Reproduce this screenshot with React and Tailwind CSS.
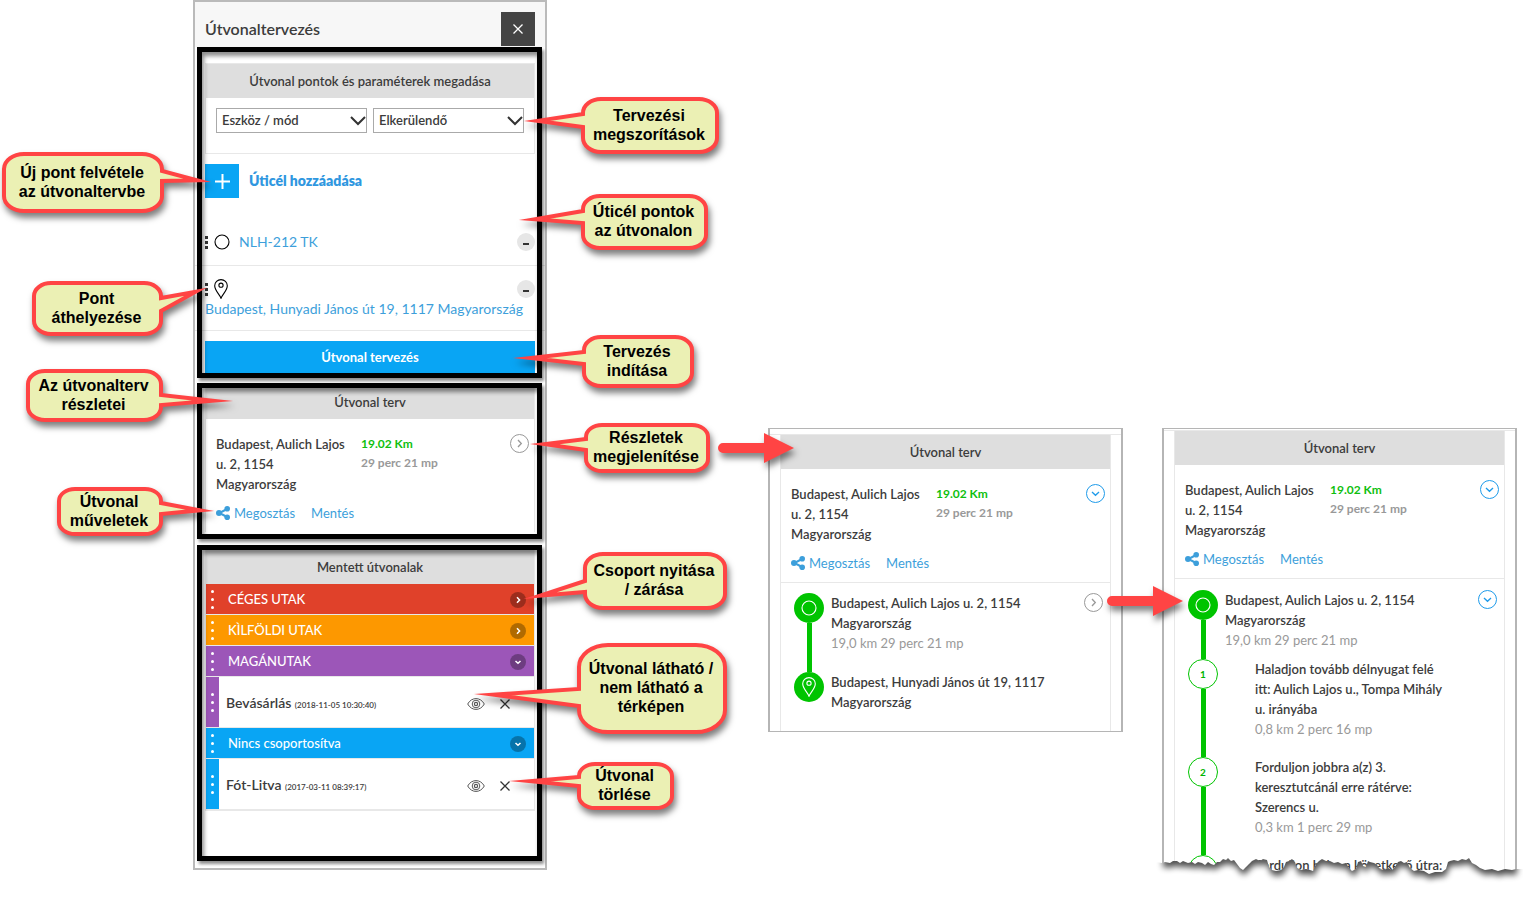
import React, { useState } from "react";

const BORDER = "border-[#e8e8e8]";

// Rounded speech bubble with a pointed tail. All numbers are local to the bubble.
const Callout = ({ className, width, height, tail, children }) => {
    const ry = Math.round(height * 0.24);
    const rx = Math.round(ry * 1.3);
    const right = width - 2;
    const bottom = height - 2;
    const top = tail.from + 2;
    const end = tail.to - 2;
    const half = (end - top) / 2;
    const middle = (end + top) / 2;
    const baseX = tail.x > 0 ? right : 2;
    // the mitred stroke reaches past the apex, so pull the apex back
    const ratio = half / (half + 2);
    const apexX = baseX + (tail.x - baseX) * ratio;
    const apexY = middle + (tail.y - middle) * ratio;
    const rightSide = tail.x > 0 ? `V${top} L${apexX} ${apexY} L${right} ${end}` : "";
    const leftSide = tail.x > 0 ? "" : `V${end} L${apexX} ${apexY} L2 ${top}`;
    const d = `M${2 + rx} 2 H${right - rx} A${rx} ${ry} 0 0 1 ${right} ${2 + ry} ${rightSide}
        V${bottom - ry} A${rx} ${ry} 0 0 1 ${right - rx} ${bottom}
        H${2 + rx} A${rx} ${ry} 0 0 1 2 ${bottom - ry} ${leftSide}
        V${2 + ry} A${rx} ${ry} 0 0 1 ${2 + rx} 2 Z`;

    return (
        <div className={`absolute z-20 grid place-items-center pointer-events-none ${className}`}>
            <svg
                width={width}
                height={height}
                className="[grid-area:1/1] overflow-visible drop-shadow-[2px_5px_3px_rgba(0,0,0,0.5)]"
            >
                <path d={d} fill="#ebf0b4" stroke="#ff4444" strokeWidth="4" strokeMiterlimit="60" />
            </svg>
            <p className="[grid-area:1/1] z-10 pb-[2px] pr-[2px] text-center whitespace-nowrap font-['Liberation_Sans',sans-serif] font-bold text-base leading-[19px] text-black">
                {children}
            </p>
        </div>
    );
};

const Arrow = ({ className }) => (
    <svg
        width="76"
        height="30"
        viewBox="0 0 76 30"
        className={`absolute z-20 overflow-visible drop-shadow-[2px_5px_3px_rgba(0,0,0,0.5)] ${className}`}
    >
        <path d="M5 10 H46 V0 L76 15 L46 30 V20 H5 A5 5 0 0 1 5 10 Z" fill="#ff4444" />
    </svg>
);

// Thick black marker frame laid over a section
const Frame = ({ className }) => (
    <div
        className={`absolute z-10 -left-2 right-[-7px] border-5 border-black pointer-events-none shadow-[2px_3px_3px_rgba(0,0,0,0.45),inset_2px_4px_4px_rgba(0,0,0,0.45)] ${className}`}
    ></div>
);

const PinIcon = ({ className }) => (
    <svg width="14" height="20" viewBox="0 0 14 20" fill="none" stroke="currentColor" className={className}>
        <path d="M7 19.2 C5.6 15.6 0.7 11.4 0.7 6.8 A6.3 6.2 0 0 1 13.3 6.8 C13.3 11.4 8.4 15.6 7 19.2 Z" strokeWidth="1.1" />
        <circle cx="7" cy="6.2" r="2.1" strokeWidth="1.1" />
    </svg>
);

const RingIcon = ({ className }) => (
    <svg width="16" height="16" viewBox="0 0 16 16" fill="none" stroke="currentColor" className={className}>
        <circle cx="8" cy="8" r="7" strokeWidth="1.1" />
    </svg>
);

const ShareIcon = () => (
    <svg width="14" height="14" viewBox="0 0 14 14" className="shrink-0">
        <path d="M11 3 L3.5 7 L11 11" fill="none" stroke="currentColor" strokeWidth="2" />
        <circle cx="11.2" cy="2.8" r="2.8" fill="currentColor" />
        <circle cx="3" cy="7" r="3" fill="currentColor" />
        <circle cx="11.2" cy="11.2" r="2.8" fill="currentColor" />
    </svg>
);

const EyeIcon = () => (
    <svg width="18" height="14" viewBox="0 0 18 14" fill="none" stroke="#555">
        <path d="M0.7 7 C4.5 -0.2 13.5 -0.2 17.3 7 C13.5 14.2 4.5 14.2 0.7 7 Z" strokeWidth="1" />
        <circle cx="9" cy="7" r="3.8" strokeWidth="1" />
        <circle cx="9" cy="7" r="1.6" strokeWidth="1.2" />
    </svg>
);

const CrossIcon = ({ className }) => (
    <svg width="10" height="10" viewBox="0 0 10 10" fill="none" stroke="currentColor" className={className}>
        <path d="M0.5 0.5 L9.5 9.5 M9.5 0.5 L0.5 9.5" strokeWidth="1.3" />
    </svg>
);

const RoundToggle = ({ open, onClick, label, className }) => (
    <button
        onClick={onClick}
        aria-label={label}
        className={`shrink-0 size-[19px] rounded-full border flex items-center justify-center ${
            open ? "border-[#1e9bea] text-[#1e9bea]" : "border-[#999] text-[#999]"
        } ${className}`}
    >
        <svg width="9" height="9" viewBox="0 0 9 9" fill="none" stroke="currentColor" strokeWidth="1.3">
            {open ? <path d="M1 3 L4.5 6.3 L8 3" /> : <path d="M3 1 L6.3 4.5 L3 8" />}
        </svg>
    </button>
);

const SectionTitle = ({ children }) => (
    <h2 className="h-[34px] pt-[2px] flex items-center justify-center bg-[#dedede] text-[13px] font-semibold">{children}</h2>
);

const Dropdown = ({ id, label }) => (
    <div className="relative flex-1">
        <select
            id={id}
            aria-label={label}
            className="block w-full h-[25px] pl-[5px] pr-6 pt-px appearance-none border border-[#aaa] bg-white text-[13px] font-semibold"
        >
            <option>{label}</option>
        </select>
        <svg
            width="16"
            height="10"
            viewBox="0 0 16 10"
            fill="none"
            stroke="#333"
            strokeWidth="2"
            className="absolute right-px top-2 pointer-events-none"
        >
            <path d="M1 1 L8 8 L15 1" />
        </svg>
    </div>
);

const Grip = () => (
    <span className="flex flex-col gap-[2px] cursor-move">
        <i className="size-[3px] bg-[#333]"></i>
        <i className="size-[3px] bg-[#333]"></i>
        <i className="size-[3px] bg-[#333]"></i>
    </span>
);

const RemoveButton = ({ label }) => (
    <button aria-label={label} className="ml-auto size-[18px] rounded-full bg-[#e6e6e6] flex items-center justify-center">
        <span className="w-[6px] h-[2px] mt-[3px] bg-[#333]"></span>
    </button>
);

const RoutePlan = ({ open, children }) => (
    <div className={`border-x ${BORDER} bg-white`}>
        <SectionTitle>Útvonal terv</SectionTitle>
        <div className="pt-[15px] pb-[9px] pl-[10px] pr-[5px]">
            <div className="flex items-start">
                <p className="w-[145px] pr-[10px] text-[13px] leading-5 font-semibold">
                    Budapest, Aulich Lajos u. 2, 1154 Magyarország
                </p>
                <div className="flex-1 text-xs leading-[19px] font-bold">
                    <p className="text-[#0fbf0f]">19.02 Km</p>
                    <p className="text-[#999]">29 perc 21 mp</p>
                </div>
                <RoundToggle open={open} label="Részletek" />
            </div>
            <div className="mt-[9px] flex items-center gap-4 text-[13px] leading-5 text-[#3d9fdb]">
                <a href="#share" className="flex items-center gap-1">
                    <ShareIcon />
                    Megosztás
                </a>
                <a href="#save">Mentés</a>
            </div>
        </div>
        {children}
    </div>
);

const StopItem = ({ icon, title, info, className, children }) => (
    <li className="flex">
        <div className="w-[30px] shrink-0 flex flex-col items-center">
            <span className="size-[30px] rounded-full bg-[#00c400] text-white flex items-center justify-center">{icon}</span>
            {info && <span className="w-[5px] flex-1 bg-[#00c400]"></span>}
        </div>
        <div className={`flex-1 pl-[7px] text-[13px] leading-5 ${className}`}>
            <p className="font-semibold">{title}</p>
            {info && <p className="text-[#999]">{info}</p>}
        </div>
        {children}
    </li>
);

const StepItem = ({ number, title, info, className }) => (
    <li className={`flex ${className}`}>
        <div className="w-[30px] shrink-0 flex flex-col items-center">
            <span className="size-[30px] shrink-0 rounded-full border border-[#00c400] bg-white text-[#00b400] text-[10px] font-bold flex items-center justify-center">
                {number}
            </span>
            <span className="w-[5px] flex-1 bg-[#00c400]"></span>
        </div>
        <div className="flex-1 pl-[37px] pr-[52px] text-[13px] leading-5">
            <p className="font-semibold">{title}</p>
            {info && <p className="pb-[18px] text-[#999]">{info}</p>}
        </div>
    </li>
);

const WhiteDots = () => (
    <span className="w-[13px] shrink-0 flex flex-col items-center justify-center gap-[5px]">
        <i className="size-[3px] rounded-full bg-white"></i>
        <i className="size-[3px] rounded-full bg-white"></i>
        <i className="size-[3px] rounded-full bg-white"></i>
    </span>
);

const groups = [
    { name: "CÉGES UTAK", color: "bg-[#e0412a]", open: false, routes: [] },
    { name: "KÌLFÖLDI UTAK", color: "bg-[#fd9800]", open: false, routes: [] },
    {
        name: "MAGÁNUTAK",
        color: "bg-[#9c56b8]",
        open: true,
        routes: [{ name: "Bevásárlás", date: "(2018-11-05 10:30:40)" }],
    },
    {
        name: "Nincs csoportosítva",
        color: "bg-[#09a5f4]",
        open: true,
        routes: [{ name: "Fót-Litva", date: "(2017-03-11 08:39:17)" }],
    },
];

const RouteGroup = ({ group }) => {
    const [open, setOpen] = useState(group.open);

    return (
        <>
            <div className={`h-[30px] flex text-white ${group.color}`}>
                <WhiteDots />
                <h3 className="flex-1 pl-[9px] text-[13px] leading-[30px] font-medium">{group.name}</h3>
                <button
                    onClick={() => setOpen(!open)}
                    aria-label={group.name}
                    className="self-center mt-[2px] mr-2 size-4 rounded-full bg-black/30 flex items-center justify-center"
                >
                    <svg width="8" height="8" viewBox="0 0 8 8" fill="none" stroke="currentColor" strokeWidth="1.5">
                        {open ? <path d="M1.5 3 L4 5.3 L6.5 3" /> : <path d="M3 1.2 L5.6 4 L3 6.8" />}
                    </svg>
                </button>
            </div>
            {open &&
                group.routes.map((route) => (
                    <div key={route.name} className="h-[50px] flex items-center bg-white">
                        <div className={`self-stretch flex ${group.color}`}>
                            <WhiteDots />
                        </div>
                        <p className="flex-1 pl-[7px] pt-[2px] text-sm font-semibold">
                            {route.name} <span className="text-[8px] font-semibold">{route.date}</span>
                        </p>
                        <button aria-label="Megjelenítés" className="mt-1">
                            <EyeIcon />
                        </button>
                        <button aria-label="Törlés" className="mt-1 ml-[15px] mr-6 text-[#333]">
                            <CrossIcon />
                        </button>
                    </div>
                ))}
        </>
    );
};

const PlannerPanel = () => (
    <section className="w-full border-2 border-[#bababa] bg-white">
        <header className="h-[45px] pl-[10px] pr-[10px] flex items-center justify-between bg-[#f7f7f7]">
            <h1 className="mt-2 text-base font-semibold">Útvonaltervezés</h1>
            <button aria-label="Bezárás" className="mt-[9px] size-[34px] bg-[#444] text-white flex items-center justify-center">
                <CrossIcon />
            </button>
        </header>

        {/* Route points and parameters */}
        <div className="relative mt-4 mx-[10px]">
            <Frame className="-top-4 bottom-[-5px]" />
            <div className={`border ${BORDER}`}>
                <SectionTitle>Útvonal pontok és paraméterek megadása</SectionTitle>
                <div className="px-[10px] pt-[10px] pb-5 flex gap-[6px]">
                    <Dropdown id="mode" label="Eszköz / mód" />
                    <Dropdown id="avoid" label="Elkerülendő" />
                </div>
            </div>

            <button className="mt-[10px] flex items-center gap-[10px] text-sm font-extrabold text-[#2f97e0]">
                <span className="size-[34px] bg-[#09a5f4] text-white flex items-center justify-center">
                    <svg width="15" height="15" viewBox="0 0 15 15" stroke="currentColor" strokeWidth="2">
                        <path d="M7.5 0 V15 M0 7.5 H15" />
                    </svg>
                </span>
                Úticél hozzáadása
            </button>

            <ul className="text-sm leading-5 text-[#3d9fdb]">
                <li className={`-mx-[10px] px-[10px] pt-[34px] pb-[13px] flex items-center border-b ${BORDER}`}>
                    <Grip />
                    <RingIcon className="ml-[6px] mr-[9px] text-black" />
                    NLH-212 TK
                    <RemoveButton label="NLH-212 TK törlése" />
                </li>
                <li className={`-mx-[10px] px-[10px] pt-[13px] pb-[11px] border-b ${BORDER}`}>
                    <div className="flex items-center">
                        <Grip />
                        <PinIcon className="ml-[6px] text-black" />
                        <RemoveButton label="Budapest törlése" />
                    </div>
                    <p className="whitespace-nowrap">Budapest, Hunyadi János út 19, 1117 Magyarország</p>
                </li>
            </ul>

            <button className="mt-[10px] w-full h-8 pt-[2px] bg-[#09a5f4] text-white text-[13px] font-bold">
                Útvonal tervezés
            </button>
        </div>

        {/* Route plan */}
        <div className="relative mt-3 mx-[10px]">
            <Frame className="-top-[2px] bottom-[-7px]" />
            <RoutePlan />
        </div>

        {/* Saved routes */}
        <div className="relative mt-[18px] mb-3 mx-[10px] pb-[45px]">
            <Frame className="-top-[5px] bottom-[-5px]" />
            <div className={`border-x border-b-2 ${BORDER} bg-[#e8e8e8]`}>
                <SectionTitle>Mentett útvonalak</SectionTitle>
                <div className="flex flex-col gap-px">
                    {groups.map((group) => (
                        <RouteGroup key={group.name} group={group} />
                    ))}
                </div>
            </div>
        </div>
    </section>
);

const DetailsPanel = () => (
    <section className="w-full pt-[5px] border-y border-x-2 border-[#b5b5b5] bg-white">
        <div className={`px-[10px] border-t ${BORDER}`}>
            <RoutePlan open>
                <ul className={`pt-[10px] pb-[19px] pl-[13px] border-t ${BORDER}`}>
                    <StopItem
                        icon={<RingIcon />}
                        title="Budapest, Aulich Lajos u. 2, 1154 Magyarország"
                        info="19,0 km 29 perc 21 mp"
                        className="pr-8 pb-[19px]"
                    >
                        <RoundToggle label="Lépések" className="mr-[7px]" />
                    </StopItem>
                    <StopItem icon={<PinIcon />} title="Budapest, Hunyadi János út 19, 1117 Magyarország" className="pr-14" />
                </ul>
            </RoutePlan>
        </div>
    </section>
);

const tornEdge =
    "0,13 3,12 8,13 11,11 15,11 18,13 21,11 26,13 30,12 33,14 36,12 40,13 43,15 46,12 49,14 52,15 55,12 58,12 61,9 64,10 66,8 69,11 72,10 75,14 78,18 81,20 84,17 87,14 90,11 94,9 98,11 101,9 105,10 107,17 110,20 114,21 119,20 122,17 124,12 127,11 130,9 133,12 135,18 139,20 144,19 148,20 151,21 154,14 157,11 160,9 164,11 168,11 172,13 176,12 180,14 184,13 187,18 190,21 194,19 196,12 199,11 201,16 204,17 206,11 208,12 212,13 215,15 218,19 222,20 226,18 230,20 233,17 236,12 239,11 242,13 245,12 248,18 252,21 256,20 262,21 267,24 273,22 280,22 284,19 286,12 288,11 292,10 296,11 300,9 304,10 307,8 310,13 314,15 318,18 323,20 330,19 336,21 343,19 350,20 354,19";

const StepsPanel = () => (
    <section className="relative w-full pt-px border-t border-x-2 border-[#b5b5b5] bg-white">
        <div className={`px-[10px] border-t ${BORDER}`}>
            <RoutePlan open>
                <ul className={`pt-[11px] pl-[13px] border-t ${BORDER}`}>
                    <StopItem
                        icon={<RingIcon />}
                        title="Budapest, Aulich Lajos u. 2, 1154 Magyarország"
                        info="19,0 km 29 perc 21 mp"
                        className="pr-8 pb-[9px]"
                    >
                        <RoundToggle open label="Lépések" className="mr-[7px]" />
                    </StopItem>
                    <StepItem
                        number="1"
                        title="Haladjon tovább délnyugat felé itt: Aulich Lajos u., Tompa Mihály u. irányába"
                        info="0,8 km 2 perc 16 mp"
                    />
                    <StepItem
                        number="2"
                        title="Forduljon jobbra a(z) 3. keresztutcánál erre rátérve: Szerencs u."
                        info="0,3 km 1 perc 29 mp"
                    />
                    <StepItem number="3" title="Forduljon balra a következő útra:" className="h-5 overflow-hidden whitespace-nowrap" />
                </ul>
            </RoutePlan>
        </div>

        {/* Torn paper edge */}
        <svg width="355" height="44" viewBox="0 0 355 44" className="absolute -left-[2px] -bottom-[19px] overflow-visible">
            <defs>
                <clipPath id="below-tear">
                    <polygon points={`-6,12 ${tornEdge} 361,19 361,60 -6,60`} />
                </clipPath>
                <filter id="tear-blur" x="-10%" y="-100%" width="120%" height="300%">
                    <feGaussianBlur stdDeviation="3" />
                </filter>
            </defs>
            <g clipPath="url(#below-tear)">
                <rect x="-6" width="367" height="60" fill="#fff" />
                <polygon points={`${tornEdge} 354,0 0,0`} fill="#000" opacity="0.7" filter="url(#tear-blur)" transform="translate(1 5)" />
            </g>
        </svg>
    </section>
);

export default function App() {
    return (
        <main className="min-h-screen flex items-start pl-[193px] pb-8 bg-white font-[Lato,sans-serif] text-[#3c3c3c] overflow-hidden">
            <div className="relative w-[354px] shrink-0">
                <PlannerPanel />

                <Callout className="left-[-191px] top-[152px]" width={162} height={61} tail={{ from: 17, to: 31, x: 209, y: 30 }}>
                    Új pont felvétele
                    <br />
                    az útvonaltervbe
                </Callout>
                <Callout className="left-[-161px] top-[281px]" width={131} height={55} tail={{ from: 15, to: 32, x: 174, y: 7 }}>
                    Pont
                    <br />
                    áthelyezése
                </Callout>
                <Callout className="left-[-167px] top-[369px]" width={137} height={53} tail={{ from: 24, to: 38, x: 207, y: 32 }}>
                    Az útvonalterv
                    <br />
                    részletei
                </Callout>
                <Callout className="left-[-136px] top-[487px]" width={106} height={49} tail={{ from: 14, to: 29, x: 157, y: 24 }}>
                    Útvonal
                    <br />
                    műveletek
                </Callout>

                <Callout className="left-[388px] top-[97px]" width={138} height={57} tail={{ from: 15, to: 32, x: -57, y: 24 }}>
                    Tervezési
                    <br />
                    megszorítások
                </Callout>
                <Callout className="left-[388px] top-[194px]" width={127} height={56} tail={{ from: 15, to: 31, x: -62, y: 26 }}>
                    Úticél pontok
                    <br />
                    az útvonalon
                </Callout>
                <Callout className="left-[389px] top-[335px]" width={112} height={53} tail={{ from: 15, to: 31, x: -69, y: 23 }}>
                    Tervezés
                    <br />
                    indítása
                </Callout>
                <Callout className="left-[391px] top-[423px]" width={126} height={50} tail={{ from: 14, to: 29, x: -54, y: 21 }}>
                    Részletek
                    <br />
                    megjelenítése
                </Callout>
                <Callout className="left-[390px] top-[552px]" width={144} height={58} tail={{ from: 27, to: 42, x: -59, y: 47 }}>
                    Csoport nyitása
                    <br />
                    / zárása
                </Callout>
                <Callout className="left-[384px] top-[643px]" width={150} height={91} tail={{ from: 44, to: 65, x: -103, y: 51 }}>
                    Útvonal látható /
                    <br />
                    nem látható a
                    <br />
                    térképen
                </Callout>
                <Callout className="left-[384px] top-[762px]" width={97} height={48} tail={{ from: 13, to: 26, x: -68, y: 19 }}>
                    Útvonal
                    <br />
                    törlése
                </Callout>
            </div>

            <div className="relative mt-[428px] ml-[221px] w-[355px] shrink-0">
                <DetailsPanel />
                <Arrow className="left-[-50px] top-[5px]" />
            </div>

            <div className="relative mt-[428px] ml-[39px] w-[355px] shrink-0">
                <StepsPanel />
                <Arrow className="left-[-55px] top-[158px]" />
            </div>
        </main>
    );
}
